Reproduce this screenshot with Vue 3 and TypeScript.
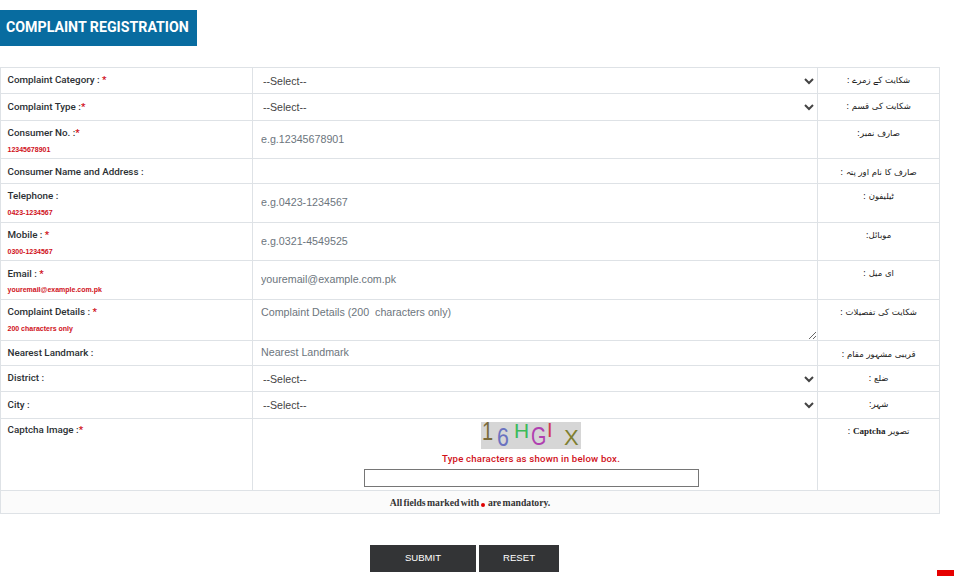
<script setup lang="ts">
interface Row {
  label: string
  req?: string
  hint?: string
  kind: 'select' | 'input' | 'area' | 'none' | 'captcha'
  ph?: string
  urdu: string
  latin?: string
  tail?: string
  cls: string
}
const rows: Row[] = [
  { label: 'Complaint Category : ', req: '*', kind: 'select', urdu: 'شکایت کے زمرے :', cls: 'h26' },
  { label: 'Complaint Type :', req: '*', kind: 'select', urdu: 'شکایت کی قسم :', cls: 'h27 p7' },
  { label: 'Consumer No. :', req: '*', hint: '12345678901', kind: 'input', ph: 'e.g.12345678901', urdu: 'صارف نمبر:', cls: 'h38' },
  { label: 'Consumer Name and Address :', kind: 'none', urdu: 'صارف کا نام اور پتہ :', cls: 'h25 low p7' },
  { label: 'Telephone :', hint: '0423-1234567', kind: 'input', ph: 'e.g.0423-1234567', urdu: 'ٹیلیفون :', cls: 'h39' },
  { label: 'Mobile : ', req: '*', hint: '0300-1234567', kind: 'input', ph: 'e.g.0321-4549525', urdu: 'موبائل:', cls: 'h38' },
  { label: 'Email : ', req: '*', hint: 'youremail@example.com.pk', kind: 'input', ph: 'youremail@example.com.pk', urdu: 'ای میل :', cls: 'h39 p7' },
  { label: 'Complaint Details : ', req: '*', hint: '200 characters only', kind: 'area', ph: 'Complaint Details (200  characters only)', urdu: 'شکایت کی تفصیلات :', cls: 'h41' },
  { label: 'Nearest Landmark :', kind: 'input', ph: 'Nearest Landmark', urdu: 'قریبی مشہور مقام :', cls: 'h25 low' },
  { label: 'District :', kind: 'select', urdu: 'ضلع :', cls: 'h26' },
  { label: 'City :', kind: 'select', urdu: 'شہر:', cls: 'h27 p7' },
  { label: 'Captcha Image :', req: '*', kind: 'captcha', urdu: 'تصویر ', latin: 'Captcha', tail: ' :', cls: 'h72 p5' }
]
const glyphs = [
  { c: '1', left: 1, top: 0, fill: '#7a6a3a', size: 25, sx: 0.8 },
  { c: '6', left: 16, top: 6, fill: '#6a72c0', size: 26, sx: 0.82 },
  { c: 'H', left: 33, top: 1, fill: '#3dbb5a', size: 21, sx: 1 },
  { c: 'G', left: 50, top: 5, fill: '#b040b0', size: 26, sx: 0.76 },
  { c: 'I', left: 66, top: 1, fill: '#d03a50', size: 20, sx: 1 },
  { c: 'X', left: 83, top: 8, fill: '#7f7f30', size: 22, sx: 1 }
]
</script>

<template>
  <div class="page">
    <h1 class="title">COMPLAINT REGISTRATION</h1>
    <table class="form">
      <colgroup>
        <col class="c1" />
        <col class="c2" />
        <col class="c3" />
      </colgroup>
      <tbody>
        <tr v-for="r in rows" :key="r.label" :class="r.cls">
          <td class="lab">
            <div class="labtext">{{ r.label }}<span v-if="r.req" class="req">{{ r.req }}</span></div>
            <div v-if="r.hint" class="hint">{{ r.hint }}</div>
          </td>
          <td class="field">
            <select v-if="r.kind === 'select'" class="sel"><option>--Select--</option></select>
            <input v-else-if="r.kind === 'input'" class="inp" type="text" :placeholder="r.ph" />
            <textarea v-else-if="r.kind === 'area'" class="area" :placeholder="r.ph"></textarea>
            <div v-else-if="r.kind === 'captcha'" class="cap">
              <div class="capimg">
                <span
                  v-for="g in glyphs"
                  :key="g.c"
                  class="capglyph"
                  :style="{ left: g.left + 'px', top: g.top + 'px', color: g.fill, fontSize: g.size + 'px', transform: `scaleX(${g.sx})` }"
                >{{ g.c }}</span>
              </div>
              <div class="capmsg">Type characters as shown in below box.</div>
              <input class="capinp" type="text" />
            </div>
          </td>
          <td class="urdu" lang="ur" dir="rtl">{{ r.urdu }}<span v-if="r.latin" class="lat">{{ r.latin }}</span>{{ r.tail }}</td>
        </tr>
        <tr class="foot">
          <td colspan="3">All fields marked with <span class="dot"></span> are mandatory.</td>
        </tr>
      </tbody>
    </table>
    <div class="actions">
      <button class="btn submit" type="button">SUBMIT</button>
      <button class="btn reset" type="button">RESET</button>
    </div>
    <div class="corner"></div>
  </div>
</template>

<style scoped>
.page {
  position: relative;
  width: 954px;
  height: 576px;
  overflow: hidden;
  padding-top: 10px;
  box-sizing: border-box;
  background: #fff;
  font-family: "Liberation Sans", Arial, sans-serif;
}
.title {
  margin: 0;
  display: inline-block;
  width: 197px;
  height: 36px;
  box-sizing: border-box;
  padding-left: 6px;
  background: #086ca0;
  color: #fff;
  font: 700 14.2px/35px Roboto, sans-serif;
  white-space: nowrap;
  vertical-align: top;
}
.form {
  display: table;
  margin-top: 21px;
  width: 939px;
  table-layout: fixed;
  border-collapse: collapse;
}
.c1 { width: 252px; }
.c2 { width: 565px; }
.c3 { width: 122px; }
td {
  border: 1px solid #dee2e6;
  padding: 0;
  vertical-align: top;
}
.h25 { height: 25px; }
.h26 { height: 26px; }
.h27 { height: 27px; }
.h38 { height: 38px; }
.h39 { height: 39px; }
.h41 { height: 41px; }
.h72 { height: 72px; }
.lab { padding: 6px 6px 0 6.5px; }
.p5 .lab { padding-top: 5px; }
.low .lab { padding-top: 6px; }
.p7 .lab { padding-top: 7px; }
.labtext {
  font: 500 9.8px/12px Roboto, sans-serif;
  color: #2b2f33;
  white-space: pre-wrap;
}
.req { color: #d0101a; font-weight: 700; }
.hint {
  margin-top: 6px;
  font: 700 7px/10px "Liberation Sans", sans-serif;
  color: #d0101a;
}
.p7 .hint { margin-top: 5px; }
.field { position: relative; }
.sel {
  display: block;
  width: 100%;
  height: 24px;
  margin-top: 1px;
  border: 0;
  outline: 0;
  background: #fff;
  padding: 0 0 0 6px;
  font: 10.6px "Liberation Sans", sans-serif;
  color: #444;
}
.inp {
  display: block;
  width: 100%;
  box-sizing: border-box;
  height: 34px;
  margin-top: 1px;
  border: 0;
  outline: 0;
  padding: 0 8px;
  background: #fff;
  font: 10.7px "Liberation Sans", sans-serif;
}
.low .inp {
  height: 19px;
}
.inp::placeholder,
.area::placeholder {
  color: #6c757d;
  opacity: 1;
}
.area {
  display: block;
  width: 100%;
  box-sizing: border-box;
  height: 39px;
  margin-top: 1px;
  border: 0;
  outline: 0;
  padding: 4px 8px;
  font: 10.7px/14px "Liberation Sans", sans-serif;
}
.cap {
  display: flex;
  flex-direction: column;
  align-items: center;
  padding: 3px 8px 0 0;
}
.capimg {
  position: relative;
  width: 100px;
  height: 27px;
  background: #d6d6d6;
}
.capglyph {
  position: absolute;
  font-family: "Liberation Sans", sans-serif;
  line-height: 0.75;
  transform-origin: left top;
}
.capmsg {
  margin-top: 4px;
  font: 500 9.6px/12px Roboto, sans-serif;
  letter-spacing: 0.2px;
  color: #d0101a;
}
.capinp {
  margin-top: 4px;
  width: 335px;
  height: 18px;
  box-sizing: border-box;
  border: 1px solid #767676;
  padding: 0;
  outline: 0;
}
.urdu {
  text-align: center;
  font: 8.5px/14px "DejaVu Sans", sans-serif;
  color: #222;
  padding-top: 5px;
}
.lat { font: 700 9px/14px "Liberation Serif", serif; }
.low .urdu { padding-top: 6px; }
.foot td {
  box-sizing: border-box;
  height: 23px;
  padding-top: 6px;
  background: #fbfbfb;
  text-align: center;
  vertical-align: top;
  font: 700 9.7px/12px "Liberation Serif", serif;
  color: #333;
  word-spacing: -1px;
}
.dot {
  display: inline-block;
  width: 4px;
  height: 4px;
  margin: 0 1px;
  border-radius: 50%;
  background: #e00000;
  vertical-align: -1px;
}
.actions {
  display: flex;
  gap: 3px;
  margin-top: 31px;
  padding-left: 370px;
}
.btn {
  height: 27px;
  border: 0;
  padding: 0 0 3px;
  background: #333436;
  color: #fff;
  font: 9.6px "Liberation Sans", sans-serif;
}
.submit { width: 106px; }
.reset { width: 80px; }
.corner {
  position: absolute;
  right: 0;
  bottom: 0;
  width: 17px;
  height: 6px;
  background: #e60000;
}
</style>
<style>
html, body { margin: 0; background: #fff; }
</style>
